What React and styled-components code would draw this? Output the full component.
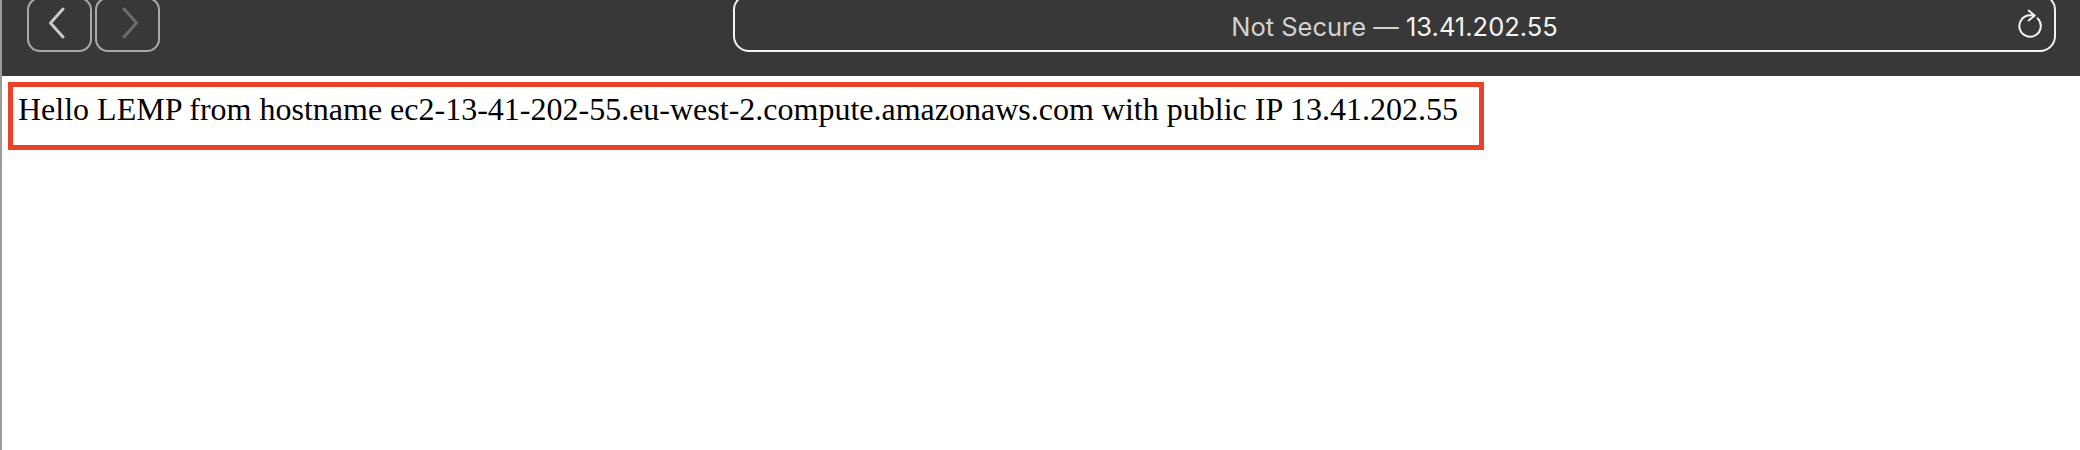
import React from 'react';
import styled, { createGlobalStyle } from 'styled-components';

const GlobalStyle = createGlobalStyle`
    html, body {
        margin: 0;
        padding: 0;
        background: #ffffff;
    }
`;

const Window = styled.div`
    min-height: 100vh;
    border-left: 2px solid #9b9b9b;
    background: #ffffff;
    box-sizing: border-box;
`;

const Toolbar = styled.div`
    height: 76px;
    box-sizing: border-box;
    padding: 0 24px 24px 25px;
    background: #383838;
    display: flex;
    align-items: flex-end;
    overflow: hidden;
`;

const NavGroup = styled.div`
    display: flex;
    gap: 3px;
`;

const NavButton = styled.div`
    width: 65px;
    height: 55px;
    box-sizing: border-box;
    border: 2px solid #a9a9a9;
    border-radius: 13px;
    display: flex;
    align-items: center;
    justify-content: center;
    padding: ${(p) => (p.$forward ? '0 0 3px 4px' : '0 5px 3px 0')};
    color: ${(p) => (p.$disabled ? '#6c6c6c' : '#c8c8c8')};
`;

const AddressBar = styled.div`
    flex: 1;
    margin-left: 573px;
    height: 58px;
    box-sizing: border-box;
    border: 2px solid #f2f2f2;
    border-radius: 16px;
    display: flex;
    align-items: center;
    justify-content: center;
    position: relative;
    padding-top: 7px;
    font-family: Inter, "Liberation Sans", sans-serif;
    font-size: 25.5px;
`;

const Muted = styled.span`
    color: #d2d2d2;
`;

const Host = styled.span`
    color: #f4f4f4;
`;

const Reload = styled.svg`
    position: absolute;
    right: 10px;
    top: 12px;
`;

const Content = styled.div`
    padding: 6px 0 0 6px;
`;

const Highlight = styled.div`
    width: fit-content;
    border: 5px solid #ea4129;
    padding: 4px 21px 17px 5px;
    font-family: "Liberation Serif", "Times New Roman", serif;
    font-size: 32px;
    color: #000000;
`;

const Chevron = ({ dir }) => (
    <svg width="18" height="32" viewBox="0 0 18 32" fill="none">
        <polyline
            points={dir === 'left' ? '15,2 2.5,16 15,30' : '3,2 15.5,16 3,30'}
            stroke="currentColor"
            strokeWidth="3"
            strokeLinecap="round"
            strokeLinejoin="round"
        />
    </svg>
);

const App = () => {
    return (
        <>
            <GlobalStyle />
            <Window>
                <Toolbar>
                    <NavGroup>
                        <NavButton>
                            <Chevron dir="left" />
                        </NavButton>
                        <NavButton $forward $disabled>
                            <Chevron dir="right" />
                        </NavButton>
                    </NavGroup>
                    <AddressBar>
                        <Muted>Not Secure — </Muted>
                        <Host>&nbsp;13.41.202.55</Host>
                        <Reload width="28" height="30" viewBox="0 0 28 30" fill="none">
                            <path
                                d="M21.6 10.4 A10.7 10.7 0 1 1 14 7.3 L17.5 7.3"
                                stroke="#f4f4f4"
                                strokeWidth="2"
                                strokeLinecap="round"
                            />
                            <polyline
                                points="12.7,2.6 18.7,7.5 12.7,12.4"
                                stroke="#f4f4f4"
                                strokeWidth="2"
                                strokeLinecap="round"
                                strokeLinejoin="round"
                            />
                        </Reload>
                    </AddressBar>
                </Toolbar>
                <Content>
                    <Highlight>
                        Hello LEMP from hostname ec2-13-41-202-55.eu-west-2.compute.amazonaws.com with public IP 13.41.202.55
                    </Highlight>
                </Content>
            </Window>
        </>
    );
};

export default App;
